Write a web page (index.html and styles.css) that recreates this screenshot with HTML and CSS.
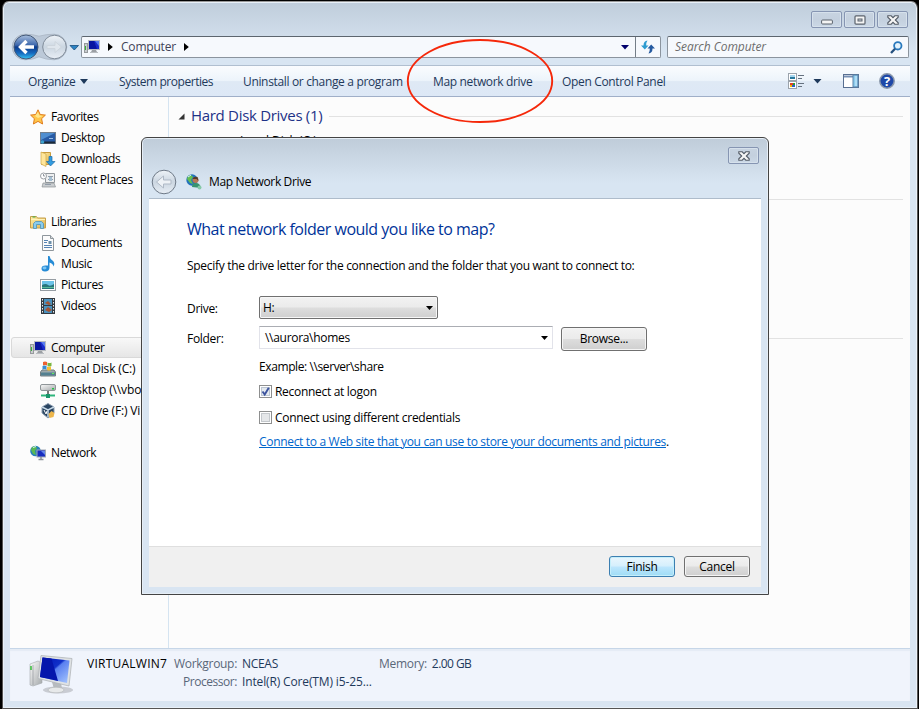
FILE: index.html
```html
<!DOCTYPE html>
<html lang="en">
<head>
    <meta charset="UTF-8">
    <meta name="viewport" content="width=device-width, initial-scale=1.0">
    <title>Computer</title>
    <link rel="stylesheet" href="styles.css">
</head>
<body>
    <!-- Shared icons -->
    <svg class="defs" width="0" height="0">
        <defs>
            <linearGradient id="screen" x1="0" y1="0" x2="1" y2="1">
                <stop offset="0" stop-color="#0011b8"/><stop offset=".45" stop-color="#1030c8"/><stop offset=".5" stop-color="#5a80f0"/><stop offset="1" stop-color="#a8c8ff"/>
            </linearGradient>
            <linearGradient id="orb" x1="0" y1="0" x2="0" y2="1">
                <stop offset="0" stop-color="#a9bfdd"/><stop offset=".42" stop-color="#3d68ad"/><stop offset=".5" stop-color="#0c3b8c"/><stop offset=".75" stop-color="#1668bd"/><stop offset="1" stop-color="#35c4f4"/>
            </linearGradient>
            <linearGradient id="glass" x1="0" y1="0" x2="0" y2="1">
                <stop offset="0" stop-color="#eef3f8"/><stop offset=".5" stop-color="#cbd6e1"/><stop offset="1" stop-color="#e8eef5"/>
            </linearGradient>
            <linearGradient id="gold" x1="0" y1="0" x2="1" y2="1">
                <stop offset="0" stop-color="#fff0a8"/><stop offset="1" stop-color="#e0b04c"/>
            </linearGradient>
            <linearGradient id="grey" x1="0" y1="0" x2="1" y2="1">
                <stop offset="0" stop-color="#fafafa"/><stop offset="1" stop-color="#a4a8aa"/>
            </linearGradient>
            <symbol id="i-computer" viewBox="0 0 16 16">
                <rect x=".5" y="4.5" width="3" height="9" fill="#c8ccce" stroke="#969a9c"/>
                <rect x="1" y="7" width="1" height="4" fill="#36b336"/>
                <rect x="4.5" y="1.5" width="11" height="9" fill="#1a2ccc" stroke="#b8bcc0"/>
                <path d="M5 2h5l3 8H5z" fill="#0815a0"/><path d="M11 2h4v5z" fill="#587cee"/>
                <path d="M8 11h4l1 2H7z" fill="#9ca0a4"/><path d="M6 13.5h8" stroke="#b8bcc0"/>
            </symbol>
            <symbol id="i-close" viewBox="0 0 12 10">
                <path d="M.8.8h3.400L6 2.700 7.800.8h3.400v1.400L8.300 5l2.900 2.800v1.400H7.800L6 7.300 4.200 9.200H.8V7.800L3.700 5 .8 2.200z" fill="#f6f6f6" stroke="#535b66" stroke-width="1.100"/>
            </symbol>
        </defs>
    </svg>

    <div class="window">
        <div class="caption">
            <div class="cap-btn"><svg width="12" height="10"><rect x=".6" y="5" width="10.800" height="4" rx="1" fill="#f4f4f4" stroke="#5a626c"/></svg></div>
            <div class="cap-btn"><svg width="12" height="10"><rect x="1" y=".8" width="10" height="8.4" rx="1" fill="#f4f4f4" stroke="#5a626c" stroke-width="1.2"/><rect x="4" y="4" width="4" height="2" fill="#ccd4dc" stroke="#5a626c"/></svg></div>
            <div class="cap-btn"><svg width="12" height="10"><use href="#i-close"/></svg></div>
        </div>

        <div class="nav">
            <svg class="nav-orbs" width="68" height="28" viewBox="0 0 68 28">
                <path d="M14 1.200q8 0 14 2 7-2 15-2a12.700 12.700 0 0 1 0 25.600q-8 0-15-3-6 3-14 3A12.800 12.800 0 0 1 14 1.200z" fill="#bcc9d8" stroke="#a9b5c3" stroke-width=".8"/>
                <circle cx="15" cy="14" r="12" fill="url(#orb)" stroke="#425878"/>
                <path d="M15.500 8 9.500 14l6 6M10 14h13" fill="none" stroke="#fff" stroke-width="3.400"/>
                <circle cx="43.500" cy="14" r="11.800" fill="url(#glass)" stroke="#7f8b99"/>
                <path d="M36 12.500h8v-4l6.500 5.500-6.500 5.500v-4h-8z" fill="#dfe6ed" stroke="#cdd5dd"/>
                <path d="M59 12.500h8.500L63.300 17z" fill="#2b83c4" stroke="#174c7d" stroke-width=".8"/>
            </svg>
            <div class="address">
                <svg width="16" height="16"><use href="#i-computer"/></svg>
                <svg class="crumb" width="5" height="8"><path d="M0 0 4.800 4 0 8z"/></svg>
                <span class="crumb-text">Computer</span>
                <svg class="crumb" width="5" height="8"><path d="M0 0 4.800 4 0 8z"/></svg>
                <svg class="drop" width="8" height="5"><path d="M0 0h8L4 4.500z" fill="#00006c"/></svg>
                <div class="refresh">
                    <svg width="14" height="14" viewBox="0 0 14 14"><path d="M0 5.500h2.500Q2.500 1 6.500.5 5 2.500 5.200 5.500H7.500L3.800 9.500z" fill="#2d9bd0"/><path d="M14 8.500h-2.500q0 4.500-4 5Q9 11.500 8.800 8.500H6.500L10.200 4.500z" fill="#255aa0"/></svg>
                </div>
            </div>
            <div class="search">
                <span>Search Computer</span>
                <svg width="13" height="13" viewBox="0 0 13 13"><circle cx="7.800" cy="4.800" r="3.700" fill="#e3f2fc" stroke="#2979bd" stroke-width="1.800"/><path d="M5 7.800 1 12" stroke="#24507e" stroke-width="2.300"/></svg>
            </div>
        </div>

        <div class="toolbar">
            <div class="tool organize">Organize <svg width="8" height="5"><path d="M0 0h8L4 5z" fill="#1e395b"/></svg></div>
            <div class="tool props">System properties</div>
            <div class="tool uninstall">Uninstall or change a program</div>
            <div class="tool map">Map network drive</div>
            <div class="tool panel">Open Control Panel</div>
            <svg class="tool-views" width="34" height="17" viewBox="0 0 34 17">
                <rect x=".5" y=".5" width="8" height="7" fill="#fff" stroke="#9ba3ac"/><path d="M2 4h5v2H2z" fill="#28799e"/><path d="M2 2h5v2H2z" fill="#a5d5ef"/>
                <rect x=".5" y="8.500" width="8" height="7" fill="#fff" stroke="#9ba3ac"/><path d="M2 10h3v2H2z" fill="#e23c28"/><path d="M5 10h2v2H5z" fill="#2a9b3a"/><path d="M2 12h2v2H2z" fill="#f0b400"/><path d="M4 12h3v2H4z" fill="#2860c8"/>
                <path d="M10 2.500h6M10 5.500h4M10 10.500h6M10 13.500h4" stroke="#65717f"/>
                <path d="M25.500 6h8l-4 4.500z" fill="#1e395b"/>
            </svg>
            <svg class="tool-pane" width="16" height="14"><rect x=".5" y=".5" width="15" height="13" fill="#fff" stroke="#586f91"/><path d="M1 2.500h9" stroke="#7790b4" stroke-width="2"/><rect x="10" y="1" width="5" height="12" fill="#8ccced" stroke="#5b83aa"/><path d="M13 2v10" stroke="#d3efff"/></svg>
            <svg class="tool-help" width="16" height="16"><circle cx="8" cy="8" r="7.200" fill="#1e48a8" stroke="#8b98ab" stroke-width="1.500"/><text x="8" y="12.500" text-anchor="middle" class="help-mark">?</text></svg>
        </div>

        <div class="main">
            <div class="sidebar">
                <div class="item root"><svg width="16" height="16"><path d="M8 .8 10.200 5.500l5.200.6-3.800 3.600 1 5.300L8 12.400 3.400 15l1-5.300L.6 6.100l5.200-.6z" fill="#ffc64a" stroke="#e07c1c"/><path d="M8 3 9.300 6.500 13 7 8 9 5 7z" fill="#ffe68c"/></svg>Favorites</div>
                <div class="item"><svg width="16" height="16"><rect x=".5" y="2.500" width="15" height="11" fill="#285ba5" stroke="#707e8d"/><path d="M1 3h14L1 10z" fill="#4f8ed0"/><path d="M1 12.500h14" stroke="#1b2938" stroke-width="2"/><circle cx="2.500" cy="12" r="1.800" fill="#3ca0cc"/><path d="M9 8.500h4" stroke="#96bce3"/></svg>Desktop</div>
                <div class="item"><svg width="16" height="16"><path d="M1.500 1.500h9v12h-9z" fill="url(#gold)" stroke="#c99c3f"/><path d="M1 1l5 2v12.500L1 13z" fill="#ffe69a" stroke="#cda748" stroke-width=".7"/><path d="M9 5.500h3v5h3L10.500 15 6.500 10.500H9z" fill="#329ce0" stroke="#1d6ba8" stroke-width=".7"/></svg>Downloads</div>
                <div class="item"><svg width="16" height="16"><path d="M5.500 1.500h9v9h-9z" fill="#eef0f1" stroke="#92989d"/><path d="M3 11h11l1.500 4H2z" fill="#c9cdd0" stroke="#8e9397" stroke-width=".7"/><circle cx="3.500" cy="4" r="3" fill="#fff" stroke="#9ba0a5"/><path d="M3.500 2v2H5" fill="none" stroke="#67707a" stroke-width=".7"/><path d="M8 4.500h5M8 7.500h5M5 12.500h6" stroke="#929da9"/><path d="M9 5h3v4H9z" fill="#a4bfd3"/></svg>Recent Places</div>
                <div class="item root section"><svg width="16" height="16"><path d="M.5 2.500h6l1 1.500h8v10H.5z" fill="url(#gold)" stroke="#c6a04b"/><path d="M1 5.500h14" stroke="#fff3b9"/><path d="M2.500 3h3" stroke="#39a94a"/><path d="M3.500 14.500v-5l2-2h6l2 2v5h-3v-4h-4v4z" fill="#89cbed" stroke="#4d92b8" stroke-width=".8"/></svg>Libraries</div>
                <div class="item"><svg width="16" height="16"><path d="M2.500.5h8l3 3v12h-11z" fill="#fbfbfb" stroke="#8e969c"/><path d="M10.500.5v3h3" fill="#d7dade" stroke="#8e969c"/><path d="M4 5.500h4M4 7.500h3M4 10.500h8M4 12.500h8" stroke="#5784b3"/><path d="M8.500 6h3v3h-3z" fill="#6c8fa9"/></svg>Documents</div>
                <div class="item"><svg width="16" height="16"><path d="M8 0h1.500q.5 3 3 4.500 3 2.500 1 6-.5-3-4-4v5q0 4-4.500 4-3.500 0-3.500-3T5.500 9.500H8z" fill="#268bd5"/><ellipse cx="4.500" cy="12" rx="2" ry="1.400" fill="#7cc5f4"/></svg>Music</div>
                <div class="item"><svg width="16" height="16"><rect x=".5" y="2.500" width="15" height="11" fill="#fff" stroke="#969da3"/><rect x="2" y="4" width="12" height="8" fill="#6cc3e8"/><path d="M2 8q4-2 6 0t6-1v5H2z" fill="#28767c"/><path d="M2 10.500h12" stroke="#55ba96"/></svg>Pictures</div>
                <div class="item"><svg width="16" height="16"><path d="M1 0h14v16H1z" fill="#343a40"/><path d="M4 1h8v6H4zM4 8h8v7H4z" fill="#4b91bd"/><path d="M5 5l3-2 3 3-2 1zM5 12l3-3 4 3-3 2z" fill="#a65332"/><path d="M2.500 1v15M13.500 1v15" stroke="#eee" stroke-dasharray="1.500 1.500"/></svg>Videos</div>
                <div class="item root section selected"><svg width="16" height="16"><use href="#i-computer"/></svg>Computer</div>
                <div class="item drive-item"><svg width="16" height="16"><path d="M2 9h12l1.500 2v4H.5v-4z" fill="#9da8aa" stroke="#737d80"/><path d="M1 11.500h14v3H1z" fill="#538091"/><path d="M12 12.500h2" stroke="#5ff157"/><path d="M3 1q2-1 4 0v3.500q-2-1-4 0z" fill="#ed6130"/><path d="M7.500 1.500q2 1 4 0V5q-2 1-4 0z" fill="#79b541"/><path d="M2.500 5q2-1 4 0v3.500q-2-1-4 0z" fill="#378cd1"/><path d="M7 5.500q2 1 4 0V9q-2 1-4 0z" fill="#f5bf35"/></svg>Local Disk (C:)</div>
                <div class="item drive-item"><svg width="16" height="16"><rect x=".5" y="2.500" width="15" height="6" rx="1.500" fill="url(#grey)" stroke="#8f9598"/><path d="M12 6h2v1.500h-2z" fill="#22c444"/><path d="M8 9v4" stroke="#777" stroke-width="2"/><path d="M1 13.500h14" stroke="#2eb57c" stroke-width="2"/><path d="M6 12h4v4H6z" fill="#1b966b"/></svg>Desktop (\\vbo</div>
                <div class="item drive-item"><svg width="16" height="16"><path d="M8 .5 14 4v6l-6 5-6-5V4z" fill="#294461" stroke="#8c9db0"/><path d="M2 4l6 3 6-3M8 7v7" stroke="#c7d9e7" fill="none" stroke-width="1.500"/><path d="M4 7l2 4 1-3" stroke="#fff" fill="none"/><path d="M8.500 11l3-3 3 2-1 4-4 1z" fill="#edb64c"/></svg>CD Drive (F:) Vi</div>
                <div class="item root section"><svg width="16" height="16"><circle cx="5.500" cy="6" r="5.300" fill="#267fbc"/><path d="M2 2q4-2 5 1L5 6l1 4-3-1-2-4z" fill="#59b955"/><path d="M3 2.500l3-1" stroke="#d6f0f5"/><rect x="7" y="5" width="8.500" height="7" fill="#172dc0" stroke="#9fa8b3"/><path d="M11 6h4v4z" fill="#6588ec"/><path d="M11 12v2M8.500 14.500h5" stroke="#8d949c" stroke-width="1.500"/></svg>Network</div>
            </div>
            <div class="content">
                <div class="group-head">
                    <svg width="7" height="7"><path d="M6.500.5v6h-6z" fill="#333"/></svg>
                    <h2>Hard Disk Drives (1)</h2>
                    <div class="rule"></div>
                </div>
                <div class="drive-name">Local Disk (C:)</div>
                <div class="rule first"></div>
                <div class="rule second"></div>
            </div>
        </div>

        <div class="details">
            <svg width="46" height="40" viewBox="0 0 46 40">
                <ellipse cx="29" cy="35" rx="15" ry="3.500" fill="#c9ccd3"/>
                <path d="M1 9l8-3 4 2v20l-9 3-3-1z" fill="url(#grey)" stroke="#a4a9ad" stroke-width=".6"/><path d="M4 10v20" stroke="#8a8f94" stroke-width=".6"/><path d="M2 11v4" stroke="#35bd38" stroke-width="1.500"/>
                <path d="M23 27h9l1 7h-8z" fill="#b7bbbf"/><ellipse cx="27" cy="35" rx="8" ry="2.800" fill="#e7e9ea" stroke="#b2b5b7" stroke-width=".6"/>
                <path d="M12 .5l31 3-3 27.500L9 23.500z" fill="#dfe2e4" stroke="#b1b5b9" stroke-width=".8"/>
                <path d="M13.500 2.500l27 3L38 28 11 22z" fill="url(#screen)"/><path d="M13.500 2.500l9 1L29 26 11 22z" fill="#0516ac"/>
            </svg>
            <div class="details-name">VIRTUALWIN7</div>
            <div class="details-labels">
                <span>Workgroup:</span>
                <span class="proc">Processor:</span>
            </div>
            <div class="details-values">
                <span>NCEAS</span>
                <span class="cpu">Intel(R) Core(TM) i5-25...</span>
            </div>
            <div class="details-memory"><span>Memory:</span> <b>2.00 GB</b></div>
        </div>
    </div>

    <!-- Map Network Drive wizard -->
    <div class="dialog">
        <div class="dialog-caption">
            <div class="cap-btn"><svg width="12" height="10"><use href="#i-close"/></svg></div>
        </div>
        <div class="dialog-title">
            <svg width="26" height="26"><circle cx="13" cy="13" r="11.800" fill="url(#glass)" stroke="#6e7987"/><path d="M5.500 13l7-6v4h7.500v4h-7.500v4z" fill="#eef2f6" stroke="#afb9c6"/></svg>
            <svg width="16" height="16"><circle cx="6" cy="6" r="5.700" fill="#2372bb"/><path d="M2 2q4-2 5 1L5 6l2 4-3-1-3-4z" fill="#65bf51"/><path d="M2 3l3-2" stroke="#d9f0ff"/><circle cx="9.500" cy="6" r="3" fill="#b97854"/><path d="M6.500 5q1-3 5-2l1 4-2-2z" fill="#573b28"/><path d="M6 13q0-4 4-4t5 5z" fill="#39946f"/><circle cx="13.500" cy="13.500" r="2" fill="#86c9a7"/></svg>
            <span>Map Network Drive</span>
        </div>
        <div class="dialog-body">
            <h1>What network folder would you like to map?</h1>
            <p class="intro">Specify the drive letter for the connection and the folder that you want to connect to:</p>
            <div class="field drive">
                <label>Drive:</label>
                <div class="select">H: <svg width="7" height="4"><path d="M0 0h7L3.500 4z"/></svg></div>
            </div>
            <div class="field folder">
                <label>Folder:</label>
                <div class="combo"><span>\\aurora\homes</span><svg width="7" height="4"><path d="M0 0h7L3.500 4z"/></svg></div>
                <div class="btn browse">Browse...</div>
            </div>
            <div class="options">
                <p class="example">Example: \\server\share</p>
                <div class="check"><svg width="13" height="13"><rect x=".5" y=".5" width="12" height="12" fill="#fff" stroke="#8e8f8f"/><rect x="2.500" y="2.500" width="8" height="8" fill="#e4e9ef" stroke="#bcc6d2"/><path d="M3.500 6.500 5.700 9.500 9.800 2.800" fill="none" stroke="#3c539e" stroke-width="1.900"/></svg><span>Reconnect at logon</span></div>
                <div class="check"><svg width="13" height="13"><rect x=".5" y=".5" width="12" height="12" fill="#fff" stroke="#8e8f8f"/><rect x="2.500" y="2.500" width="8" height="8" fill="#e5e7e9" stroke="#c4c8cc"/></svg><span>Connect using different credentials</span></div>
                <p class="web"><a href="#">Connect to a Web site that you can use to store your documents and pictures</a>.</p>
            </div>
        </div>
        <div class="dialog-footer">
            <div class="btn primary">Finish</div>
            <div class="btn">Cancel</div>
        </div>
    </div>

    <svg class="marker" width="150" height="88"><ellipse cx="75" cy="44" rx="72.200" ry="41" fill="none" stroke="#f5280a" stroke-width="1.900"/></svg>
</body>
</html>
```
FILE: styles.css
```css
/* General */
* {
    margin: 0;
    padding: 0;
    box-sizing: border-box;
}

body {
    width: 919px;
    height: 709px;
    overflow: hidden;
    position: relative;
    padding: 1px 1px 0 2px;
    background: #000;
    color: #000;
    font: 12px/16px "Open Sans", "Noto Sans", sans-serif;
    letter-spacing: -0.3px;
    white-space: nowrap;
}

svg {
    display: block;
    flex: none;
}

.defs {
    position: absolute;
}

/* Explorer window */
.window {
    height: 708px;
    display: flex;
    flex-direction: column;
    padding: 0 7px 7px;
    border: 1px solid #555;
    border-top-color: #999;
    border-radius: 7px 7px 0 0;
    background: linear-gradient(#bfcddb, #d8e5f2 50px, #d9e5f2);
    box-shadow: inset 0 0 0 1px #e9f1f9;
}

.caption {
    height: 34px;
    padding: 9px 2px 0 0;
    display: flex;
    justify-content: flex-end;
    gap: 2px;
}

.cap-btn {
    width: 31px;
    height: 17px;
    display: flex;
    align-items: center;
    justify-content: center;
    border: 1px solid #8695b2;
    border-radius: 2px;
    background: linear-gradient(#c8d4e1, #c4d0de 50%, #cbd8e6);
    box-shadow: inset 0 0 0 1px #d6e1ec;
}

.nav {
    height: 29px;
    display: flex;
}

.nav-orbs {
    margin-top: -3px;
    margin-left: 1px;
}

.address {
    width: 580px;
    height: 22px;
    margin-left: 2px;
    padding-left: 2px;
    display: flex;
    align-items: center;
    border: 1px solid #8b949e;
    border-top-color: #5d666f;
    border-radius: 2px;
    background: #f6f9fd;
}

.crumb {
    margin-left: 8px;
}

.crumb-text {
    margin: 0 8px;
    width: 55px;
    color: #404357;
    letter-spacing: -0.2px;
}

.crumb-text + .crumb {
    margin-left: 0;
}

.drop {
    margin-left: auto;
}

.refresh {
    width: 25px;
    height: 20px;
    margin-left: 6px;
    display: flex;
    align-items: center;
    justify-content: center;
    border-left: 1px solid #747e88;
}

.search {
    width: 242px;
    height: 22px;
    margin-left: 6px;
    padding: 0 5px 0 7px;
    display: flex;
    align-items: center;
    justify-content: space-between;
    border: 1px solid #8b949e;
    border-top-color: #5d666f;
    border-radius: 2px;
    background: #f6f9fd;
    color: #6d6d6d;
    font-style: italic;
    letter-spacing: -0.05px;
}

.toolbar {
    height: 32px;
    padding-left: 18px;
    display: flex;
    align-items: center;
    border-top: 1px solid #b0bfd0;
    border-bottom: 1px solid #a0afc8;
    background: linear-gradient(#fafcfe, #edf4fb 48%, #dfe9f5 52%, #dde8f6);
    color: #1e395b;
    letter-spacing: -0.34px;
}

.tool {
    padding-top: 1px;
}

.organize {
    width: 91px;
    display: flex;
    align-items: center;
    gap: 5px;
}

.props {
    width: 124px;
    letter-spacing: -0.45px;
}

.uninstall { width: 190px; }
.map { width: 129px; }
.panel { width: 226px; }

.tool-pane {
    margin-left: 21px;
}

.tool-help {
    margin-left: 20px;
}

.help-mark {
    fill: #fff;
    font-size: 13px;
    font-weight: bold;
}

.main {
    height: 551px;
    display: flex;
    background: #fcfcfc;
}

/* Navigation pane */
.sidebar {
    width: 159px;
    padding-top: 9px;
    border-right: 1px solid #d5e4f1;
    letter-spacing: -0.36px;
}

.item {
    height: 21px;
    padding-left: 30px;
    display: flex;
    align-items: center;
    gap: 5px;
}

.item.root {
    padding-left: 20px;
}

.item.section {
    margin-top: 21px;
}

.item.selected {
    margin-left: 1px;
    padding-left: 18px;
    border: 1px solid #d9d9d9;
    border-radius: 3px;
    background: linear-gradient(#f8f8f8, #e6e6e6);
}

.drive-item {
    letter-spacing: -0.15px;
}

/* Drive list */
.content {
    flex: 1;
    padding: 9px 7px 0 9px;
}

.group-head {
    display: flex;
    align-items: center;
    height: 20px;
}

.group-head h2 {
    margin: -2px 7px 0 6px;
    font-size: 15px;
    font-weight: normal;
    letter-spacing: -0.3px;
    color: #1e3287;
}

.rule {
    flex: 1;
    height: 1px;
    background: #e2e2e2;
}

.drive-name {
    height: 18px;
    margin: 7px 0 0 62px;
    letter-spacing: 0;
}

.rule.first {
    margin-top: 48px;
}

.rule.second {
    margin-top: 138px;
}

/* Details pane */
.details {
    height: 53px;
    padding: 6px 0 0 19px;
    display: flex;
    border-top: 1px solid #c6d6e8;
    background: #f0f4fc;
    box-shadow: inset 0 2px 1px #e5ecf5;
    line-height: 18px;
}

.details span {
    display: block;
}

.details-name {
    width: 87px;
    margin-left: 12px;
    letter-spacing: 0.25px;
}

.details-labels {
    width: 63px;
    color: #5a6779;
    text-align: right;
}

.details-labels .proc {
    letter-spacing: -0.45px;
}

.details-values {
    width: 137px;
    margin-left: 5px;
    color: #1e395b;
}

.details-values .cpu {
    letter-spacing: -0.14px;
}

.details-memory {
    display: flex;
    gap: 5px;
    color: #5a6779;
}

.details-memory b {
    font-weight: normal;
    letter-spacing: -0.55px;
    color: #1e395b;
}

/* Wizard dialog */
.dialog {
    position: absolute;
    left: 141px;
    top: 137px;
    width: 628px;
    height: 458px;
    padding: 0 7px 7px;
    border: 1px solid #444;
    border-radius: 6px 6px 0 0;
    background: linear-gradient(#bfccd9, #d8e5f2 45px, #d9e5f2);
    box-shadow: inset 0 0 0 1px #e6eef6;
    display: flex;
    flex-direction: column;
}

.dialog-caption {
    height: 26px;
    padding: 9px 2px 0;
    display: flex;
    justify-content: flex-end;
}

.dialog-title {
    height: 34px;
    padding: 1px 0 0 2px;
    display: flex;
    align-items: center;
}

.dialog-title span {
    margin-left: 7px;
    letter-spacing: -0.35px;
}

.dialog-title svg + svg {
    margin-left: 9px;
}

.dialog-body {
    height: 348px;
    padding: 19px 0 0 38px;
    border-top: 1px solid #aebccb;
    background: #fff;
}

.dialog-body h1 {
    height: 22px;
    font-size: 16px;
    line-height: 22px;
    font-weight: normal;
    letter-spacing: -0.5px;
    color: #003399;
}

.intro {
    margin-top: 18px;
}

.field {
    display: flex;
    align-items: center;
}

.field label {
    width: 72px;
    padding-top: 2px;
}

.drive {
    margin-top: 22px;
    height: 23px;
}

.select {
    width: 179px;
    height: 23px;
    padding: 0 4px 0 3px;
    display: flex;
    align-items: center;
    justify-content: space-between;
    border: 1px solid #707070;
    border-radius: 2px;
    background: linear-gradient(#f2f2f2, #ebebeb 48%, #dddddd 52%, #cfcfcf);
    box-shadow: inset 0 0 0 1px #f7f7f7;
}

.folder {
    margin-top: 7px;
    height: 24px;
}

.combo {
    width: 294px;
    height: 23px;
    margin-top: -1px;
    padding: 0 4px 0 5px;
    display: flex;
    align-items: center;
    justify-content: space-between;
    border: 1px solid #e2e3ea;
    border-top-color: #abadb3;
}

.btn {
    width: 66px;
    height: 21px;
    display: flex;
    align-items: center;
    justify-content: center;
    border: 1px solid #707070;
    border-radius: 3px;
    background: linear-gradient(#f2f2f2, #ebebeb 48%, #dddddd 52%, #cfcfcf);
    box-shadow: inset 0 0 0 1px #f5f5f5;
}

.browse {
    width: 86px;
    height: 24px;
    margin: 1px 0 0 8px;
}

.primary {
    border-color: #3c7fb1;
    background: linear-gradient(#eaf6fd, #d5effc 48%, #bde6fd 52%, #9edcf5);
    box-shadow: inset 0 0 0 1px #c5effb;
}

.options {
    padding: 9px 0 0 72px;
}

.example {
    letter-spacing: -0.4px;
}

.check {
    height: 16px;
    display: flex;
    align-items: center;
    gap: 3px;
    margin-top: 9px;
}

.check svg {
    margin-top: -1px;
}

.check + .check {
    margin-top: 10px;
}

.web {
    margin-top: 8px;
    letter-spacing: -0.32px;
}

.web a {
    color: #0066cc;
}

.dialog-footer {
    height: 41px;
    padding: 9px 11px 0 0;
    display: flex;
    justify-content: flex-end;
    gap: 9px;
    border-top: 1px solid #dfdfdf;
    background: #f0f0f0;
}

/* Red ring round the toolbar command */
.marker {
    position: absolute;
    left: 405px;
    top: 37px;
}
```
